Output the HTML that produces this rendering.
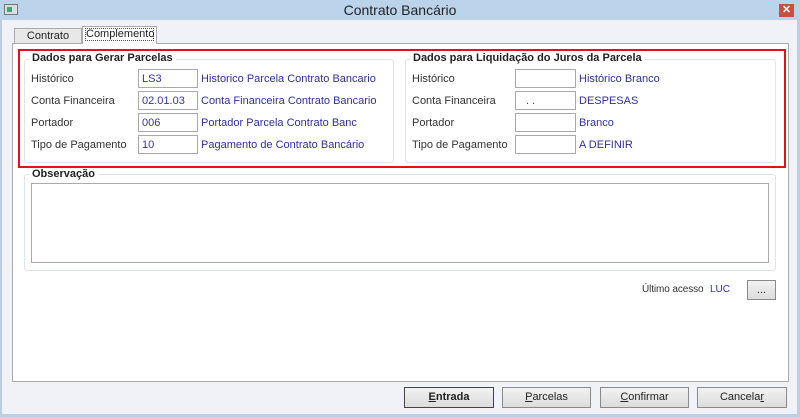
<!DOCTYPE html>
<html><head><meta charset="utf-8"><style>
*{box-sizing:border-box;margin:0;padding:0}
body{width:800px;height:417px;overflow:hidden;background:#f0f2f8;font-family:"Liberation Sans",sans-serif;font-size:11px;color:#222;position:relative}
.a{position:absolute}
.title{left:0;top:0;width:800px;height:20px;background:#bcd3ec}
.lbl{font-size:11px;color:#333}
.inp{background:#fff;border:1px solid #a9a9a9;height:19px;font-size:11px;color:#33a;padding:3px 3px 0}
.blue{color:#2f2f9f}
.grp{border:1px solid #dfe3ea;border-radius:3px}
.gt{font-weight:bold;font-size:11px;background:#fff;padding:0 3px;color:#222}
.btn{height:21px;border:1px solid #8a8a8a;background:linear-gradient(#f2f2f2,#dcdcdc);text-align:center;line-height:19px;font-size:11px;color:#222}
</style></head><body>
<div class="a title"></div>
<div class="a" style="left:4px;top:4px;width:14px;height:11px;border:1px solid #777;background:#ddd"><div style="margin:2px;width:5px;height:5px;background:#3a7"></div></div>
<div class="a" style="left:0;top:2px;width:800px;text-align:center;font-size:14px;color:#222">Contrato Bancário</div>
<div class="a" style="left:779px;top:4px;width:15px;height:13px;background:#c9503e;color:#fff;font-size:11px;font-weight:bold;text-align:center;line-height:13px">✕</div>
<div class="a" style="left:0;top:20px;width:2px;height:397px;background:#b9cfe6"></div>
<div class="a" style="left:797px;top:20px;width:3px;height:397px;background:#b9cfe6"></div>
<div class="a" style="left:0;top:414px;width:800px;height:3px;background:#b9cfe6"></div>
<div class="a" style="left:14px;top:28px;width:68px;height:16px;border:1px solid #aaa;border-bottom:none;background:#e8e8e8;text-align:center;line-height:15px">Contrato</div>
<div class="a" style="left:82px;top:26px;width:75px;height:18px;border:1px solid #aaa;border-bottom:none;background:#fff;padding:1px 2px"><div style="border:1px dotted #555;height:13px;line-height:11px;text-align:center">Complemento</div></div>
<div class="a" style="left:12px;top:43px;width:777px;height:339px;border:1px solid #aaa;background:#fff"></div>
<div class="a" style="left:83px;top:43px;width:73px;height:2px;background:#fff"></div>
<div class="a" style="left:18px;top:49px;width:768px;height:119px;border:2px solid #e0121b"></div>
<div class="a grp" style="left:24px;top:59px;width:370px;height:104px"></div>
<div class="a gt" style="left:29px;top:52px">Dados para Gerar Parcelas</div>
<div class="a grp" style="left:405px;top:59px;width:371px;height:104px"></div>
<div class="a gt" style="left:410px;top:52px">Dados para Liquidação do Juros da Parcela</div>

<div class="a lbl" style="left:31px;top:73px">Histórico</div>
<div class="a lbl" style="left:31px;top:95px">Conta Financeira</div>
<div class="a lbl" style="left:31px;top:117px">Portador</div>
<div class="a lbl" style="left:31px;top:139px">Tipo de Pagamento</div>
<div class="a inp" style="left:138px;top:69px;width:60px">LS3</div>
<div class="a inp" style="left:138px;top:91px;width:60px">02.01.03</div>
<div class="a inp" style="left:138px;top:113px;width:60px">006</div>
<div class="a inp" style="left:138px;top:135px;width:60px">10</div>
<div class="a blue" style="left:201px;top:73px">Historico Parcela Contrato Bancario</div>
<div class="a blue" style="left:201px;top:95px">Conta Financeira Contrato Bancario</div>
<div class="a blue" style="left:201px;top:117px">Portador Parcela Contrato Banc</div>
<div class="a blue" style="left:201px;top:139px">Pagamento de Contrato Bancário</div>

<div class="a lbl" style="left:412px;top:73px">Histórico</div>
<div class="a lbl" style="left:412px;top:95px">Conta Financeira</div>
<div class="a lbl" style="left:412px;top:117px">Portador</div>
<div class="a lbl" style="left:412px;top:139px">Tipo de Pagamento</div>
<div class="a inp" style="left:515px;top:69px;width:61px"></div>
<div class="a inp" style="left:515px;top:91px;width:61px;padding-left:10px">. .</div>
<div class="a inp" style="left:515px;top:113px;width:61px"></div>
<div class="a inp" style="left:515px;top:135px;width:61px"></div>
<div class="a blue" style="left:579px;top:73px">Histórico Branco</div>
<div class="a blue" style="left:579px;top:95px">DESPESAS</div>
<div class="a blue" style="left:579px;top:117px">Branco</div>
<div class="a blue" style="left:579px;top:139px">A DEFINIR</div>

<div class="a grp" style="left:24px;top:174px;width:752px;height:97px"></div>
<div class="a gt" style="left:29px;top:168px">Observação</div>
<div class="a" style="left:31px;top:183px;width:738px;height:80px;border:1px solid #aaa;background:#fff"></div>

<div class="a lbl" style="left:642px;top:284px;font-size:10px;letter-spacing:-0.1px">Último acesso</div>
<div class="a blue" style="left:710px;top:284px;font-size:10px">LUC</div>
<div class="a btn" style="left:747px;top:280px;width:29px;height:20px;line-height:18px">...</div>

<div class="a btn" style="left:404px;top:387px;width:90px;font-weight:bold;border-color:#444"><u>E</u>ntrada</div>
<div class="a btn" style="left:502px;top:387px;width:89px"><u>P</u>arcelas</div>
<div class="a btn" style="left:600px;top:387px;width:89px"><u>C</u>onfirmar</div>
<div class="a btn" style="left:697px;top:387px;width:90px">Cancela<u>r</u></div>
</body></html>
